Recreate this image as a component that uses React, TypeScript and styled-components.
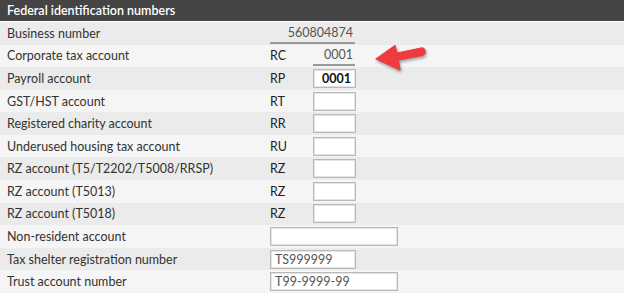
import React from "react";
import styled, { createGlobalStyle } from "styled-components";

const Global = createGlobalStyle`
  html, body { margin: 0; padding: 0; background: #ffffff; }
  body { font-family: Lato, "Open Sans", sans-serif; }
`;

const Panel = styled.div`
  position: relative;
  width: 624px;
  height: 293px;
  overflow: hidden;
  background: #f5f5f5;
`;

const Header = styled.div`
  height: 21px;
  background: #444444;
  border-bottom: 1px solid #ffffff;
  color: #ffffff;
  font-size: 12.5px;
  font-weight: 600;
  display: flex;
  align-items: center;
  padding-left: 7px;
`;

const Row = styled.div<{ $alt: boolean }>`
  height: 22.58px;
  box-sizing: border-box;
  background: ${(p) => (p.$alt ? "#ebebeb" : "#f5f5f5")};
  display: grid;
  grid-template-columns: 263px 43px 1fr;
  align-items: center;
  padding-left: 7px;
  color: #333333;
  font-size: 12.5px;
`;

const Label = styled.span``;

const Code = styled.span`
  font-weight: 400;
  font-size: 12.5px;
  color: #1f1f1f;
`;

const ReadOnly = styled.div<{ $wide: boolean }>`
  grid-column: ${(p) => (p.$wide ? "2 / span 2" : "3")};
  width: ${(p) => (p.$wide ? "85px" : "42px")};
  box-sizing: border-box;
  text-align: right;
  padding-right: 2px;
  border-bottom: 2px solid #9a9a9a;
  color: #555555;
  font-size: 12.5px;
  line-height: 18px;
  margin-top: 1px;
`;

const Input = styled.div<{ $size: "s" | "m" | "l"; $span: boolean }>`
  grid-column: ${(p) => (p.$span ? "2 / span 2" : "3")};
  width: ${(p) => (p.$size === "s" ? "43px" : p.$size === "m" ? "86px" : "128px")};
  height: 19px;
  box-sizing: border-box;
  background: #ffffff;
  border: 1px solid #b9b9b9;
  box-shadow: inset 0 0 0 1px #e4e4e4;
  display: flex;
  align-items: center;
  padding: 0 4px;
  font-size: 12.5px;
  color: #555555;
`;

const BoldValue = styled.span`
  margin-left: auto;
  color: #111111;
  font-weight: 700;
`;

const Arrow = styled.svg`
  position: absolute;
  left: 370px;
  top: 39px;
  filter: drop-shadow(1px 2px 1.5px rgba(0, 0, 0, 0.35));
`;

type RowDef = {
  label: string;
  code?: string;
  kind: "ro-wide" | "ro" | "input" | "none";
  value?: string;
  size?: "s" | "m" | "l";
  span?: boolean;
  bold?: boolean;
};

const rows: RowDef[] = [
  { label: "Business number", kind: "ro-wide", value: "560804874" },
  { label: "Corporate tax account", code: "RC", kind: "ro", value: "0001" },
  { label: "Payroll account", code: "RP", kind: "input", value: "0001", size: "s", bold: true },
  { label: "GST/HST account", code: "RT", kind: "input", size: "s" },
  { label: "Registered charity account", code: "RR", kind: "input", size: "s" },
  { label: "Underused housing tax account", code: "RU", kind: "input", size: "s" },
  { label: "RZ account (T5/T2202/T5008/RRSP)", code: "RZ", kind: "input", size: "s" },
  { label: "RZ account (T5013)", code: "RZ", kind: "input", size: "s" },
  { label: "RZ account (T5018)", code: "RZ", kind: "input", size: "s" },
  { label: "Non-resident account", kind: "input", size: "l", span: true },
  { label: "Tax shelter registration number", kind: "input", size: "m", span: true, value: "TS999999" },
  { label: "Trust account number", kind: "input", size: "l", span: true, value: "T99-9999-99" },
];

export default function App() {
  return (
    <>
      <Global />
      <Panel>
        <Header>Federal identification numbers</Header>
        {rows.map((r, i) => (
          <Row key={i} $alt={i % 2 === 0}>
            <Label>{r.label}</Label>
            {r.code && <Code>{r.code}</Code>}
            {r.kind === "ro-wide" && <ReadOnly $wide>{r.value}</ReadOnly>}
            {r.kind === "ro" && <ReadOnly $wide={false}>{r.value}</ReadOnly>}
            {r.kind === "input" && (
              <Input $size={r.size || "s"} $span={!!r.span}>
                {r.bold ? <BoldValue>{r.value}</BoldValue> : r.value}
              </Input>
            )}
          </Row>
        ))}
        <Arrow width="60" height="36" viewBox="0 0 60 36">
          <path
            d="M6 20 L25 6.5 L27 14 L51 9 A3.8 3.8 0 0 1 52.8 16.3 L28.5 21 L30 31 Z"
            fill="#ee3b3f"
            stroke="#ee3b3f"
            strokeWidth="1.2"
            strokeLinejoin="round"
          />
        </Arrow>
      </Panel>
    </>
  );
}
